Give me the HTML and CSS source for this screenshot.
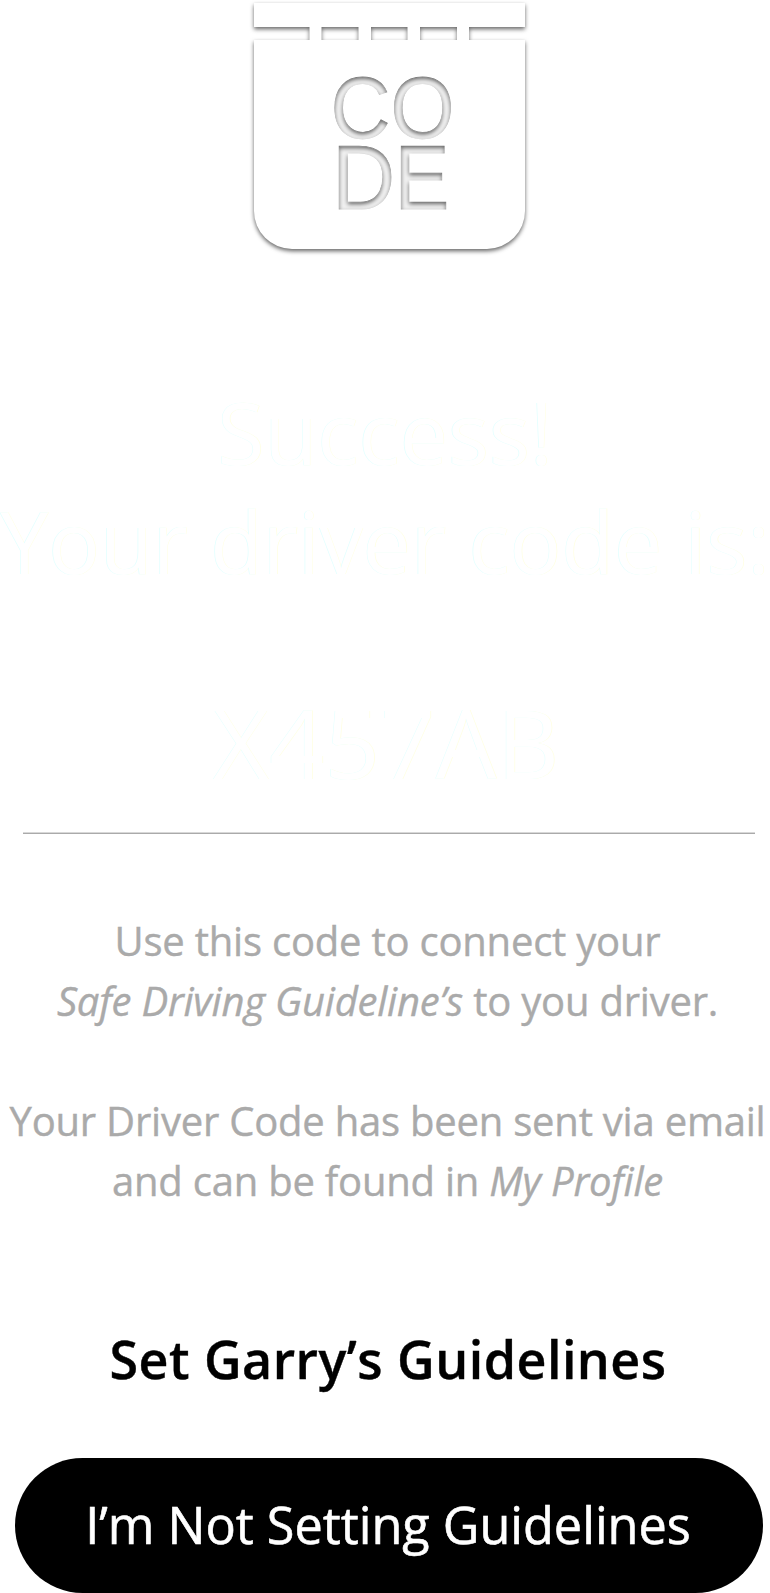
FILE: index.html
```html
<!DOCTYPE html>
<html lang="en">
<head>
<meta charset="utf-8">
<title>Driver code</title>
<link rel="stylesheet" href="styles.css">
</head>
<body>
<main class="screen">
  <svg class="code-icon" viewBox="0 0 290 260" role="img" aria-label="Code">
    <defs>
      <filter id="shadow" x="-10%" y="-10%" width="120%" height="120%" color-interpolation-filters="sRGB">
        <feDropShadow dx="0" dy="2.2" stdDeviation="2.3" flood-color="#000" flood-opacity=".6"/>
      </filter>
      <mask id="letters" maskUnits="userSpaceOnUse" x="0" y="0" width="290" height="260">
        <rect width="290" height="260" fill="#fff"/>
        <g class="letters">
          <text transform="translate(86.500 138) scale(.95 1)">C</text>
          <text transform="translate(146.500 138) scale(.94 1)">O</text>
          <text transform="translate(88 208.5) scale(1 1.04)">D</text>
          <text transform="translate(150.500 208.5) scale(.94 1.04)">E</text>
        </g>
      </mask>
    </defs>
    <rect x="80" y="65" width="130" height="155" fill="#f1f1f1"/>
    <g filter="url(#shadow)">
      <path mask="url(#letters)" fill="#fff" fill-rule="evenodd" d="M10 3H281V27H225V40H281V211A38 38 0 0 1 243 249H48A38 38 0 0 1 10 211V40H65.500V27H10ZM77.500 27V40H114.500V27ZM127 27V40H163.500V27ZM176 27V40H213V27Z"/>
    </g>
  </svg>
  <h1 class="title">Success!<br>Your driver code is:</h1>
  <div class="code">X457AB</div>
  <hr class="rule">
  <p class="copy"><span>Use this code to connect your</span><span><em>Safe Driving Guideline’s</em> to you driver.</span></p>
  <p class="copy"><span>Your Driver Code has been sent via email</span><span>and can be found in <em>My Profile</em></span></p>
  <a class="set-link">Set Garry’s Guidelines</a>
  <button class="skip-button">I’m Not Setting Guidelines</button>
</main>
</body>
</html>
```
FILE: styles.css
```css
* { box-sizing: border-box; }
body {
  margin: 0;
  background: #fff;
  font-family: "Open Sans", "Noto Sans", sans-serif;
}
.screen {
  display: flex;
  flex-direction: column;
  align-items: center;
  width: 770px;
  height: 1593px;
  overflow: hidden;
}
.code-icon {
  flex: none;
  width: 290px;
  height: 260px;
  margin-left: 8px;
}
.letters {
  font: 87.5px "Liberation Sans", Arial, sans-serif;
  fill: #000;
  stroke: #000;
  stroke-width: .8px;
}
.title {
  margin: 117px 0 0;
  font-size: 86px;
  font-weight: 400;
  line-height: 109px;
  text-align: center;
  white-space: nowrap;
}
.title, .code {
  color: #fff;
  text-shadow: -.6px 0 #e2ffff, .6px 0 #ffffe2;
}
.code {
  margin: 82px 0 0 3px;
  font-size: 96px;
  letter-spacing: .6px;
  line-height: 130px;
}
.rule {
  flex: none;
  width: 732px;
  height: 2px;
  margin: 25px 0 77px 8px;
  border: 0;
  border-top: 1px solid #d8d8d8;
  background: #aaa;
}
.copy {
  display: flex;
  flex-direction: column;
  align-items: center;
  margin: 0 0 60px 5px;
  color: #aaa;
  font-size: 40px;
  letter-spacing: -.22px;
  line-height: 60px;
  white-space: nowrap;
  -webkit-text-stroke: .4px #aaa;
}
.set-link {
  margin: 52px 0 0 6px;
  color: #000;
  font-size: 52px;
  font-weight: 600;
  letter-spacing: .46px;
  line-height: 72px;
  white-space: nowrap;
  -webkit-text-stroke: .4px #000;
}
.skip-button {
  flex: none;
  width: 748px;
  height: 135px;
  margin: auto 0 0 8px;
  padding: 0 2px 3px 0;
  border: 0;
  border-radius: 68px;
  background: #000;
  color: #fff;
  font: 50.4px "Open Sans", "Noto Sans", sans-serif;
  white-space: nowrap;
  -webkit-text-stroke: .6px #fff;
}
```
